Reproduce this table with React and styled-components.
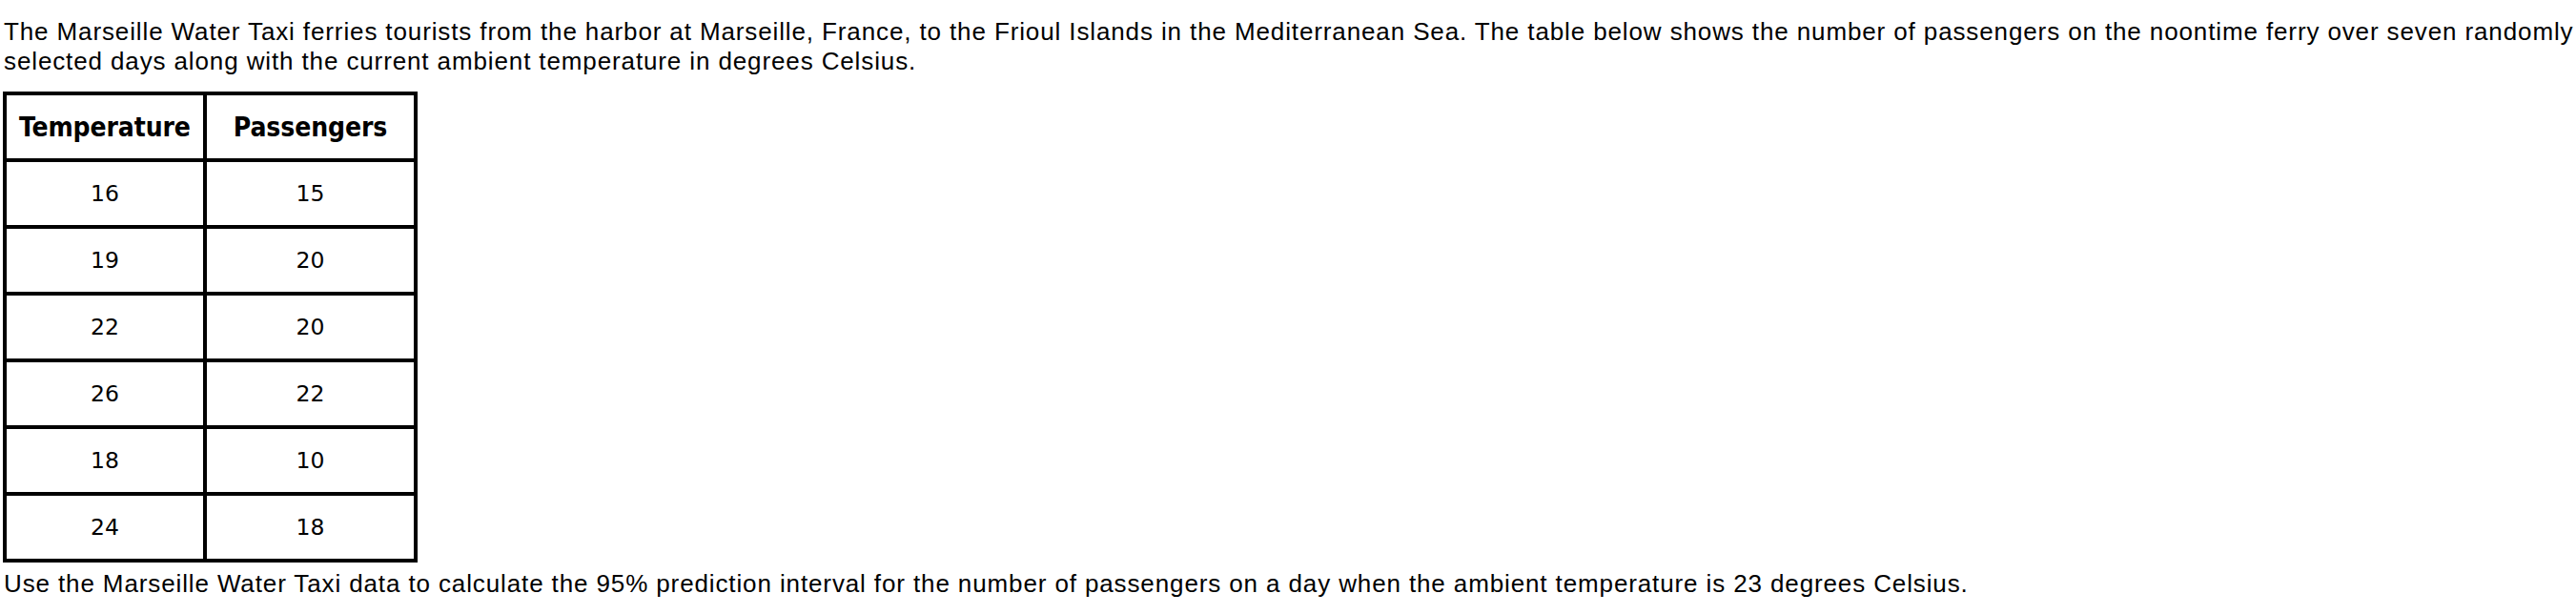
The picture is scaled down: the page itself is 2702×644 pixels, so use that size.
import React from 'react';
import styled, { createGlobalStyle } from 'styled-components';

const GlobalStyle = createGlobalStyle`
  html,
  body {
    margin: 0;
    padding: 0;
    background: #ffffff;
    overflow-x: hidden;
  }

  body {
    padding-left: 3px;
    font-family: 'Liberation Sans', Arial, sans-serif;
    color: #000;
  }
`;

const Page = styled.main`
  display: flex;
  flex-direction: column;
  align-items: flex-start;
  padding-top: 18px;
`;

const Prose = styled.p`
  margin: 0;
  padding-left: 1px;
  font-size: 26px;
  line-height: 30.5px;
  letter-spacing: 0.88px;
  white-space: ${props => (props.$fixedBreaks ? 'nowrap' : 'normal')};
`;

const DataTable = styled.table`
  margin: 17px 0 7px;
  border: 2px solid #000;
  border-spacing: 0;
  border-collapse: separate;
  table-layout: fixed;
  font-family: 'DejaVu Sans', Verdana, Tahoma, sans-serif;
`;

const Cell = styled.td`
  width: ${props => props.$width}px;
  height: 66px;
  padding: 0;
  border: 2px solid #000;
  text-align: center;
  vertical-align: middle;
  font-size: 23.5px;
  font-weight: 400;
`;

const HeadCell = styled(Cell).attrs({ as: 'th' })`
  font-family: 'DejaVu Sans Condensed', 'DejaVu Sans', Tahoma, sans-serif;
  font-size: 28px;
  font-weight: 700;
  letter-spacing: -0.1px;
`;

const rows = [
  [16, 15],
  [19, 20],
  [22, 20],
  [26, 22],
  [18, 10],
  [24, 18],
];

const widths = [206, 217];

export default function App() {
  return (
    <>
      <GlobalStyle />
      <Page>
        <Prose $fixedBreaks>
          The Marseille Water Taxi ferries tourists from the harbor at
          Marseille, France, to the Frioul Islands in the Mediterranean Sea.
          The table below shows the number of passengers on the noontime ferry
          over seven randomly
          <br />
          selected days along with the current ambient temperature in degrees
          Celsius.
        </Prose>
        <DataTable>
          <thead>
            <tr>
              <HeadCell $width={widths[0]}>Temperature</HeadCell>
              <HeadCell $width={widths[1]}>Passengers</HeadCell>
            </tr>
          </thead>
          <tbody>
            {rows.map(([temp, pass], i) => (
              <tr key={i}>
                <Cell $width={widths[0]}>{temp}</Cell>
                <Cell $width={widths[1]}>{pass}</Cell>
              </tr>
            ))}
          </tbody>
        </DataTable>
        <Prose>
          Use the Marseille Water Taxi data to calculate the 95% prediction
          interval for the number of passengers on a day when the ambient
          temperature is 23 degrees Celsius.
        </Prose>
      </Page>
    </>
  );
}
